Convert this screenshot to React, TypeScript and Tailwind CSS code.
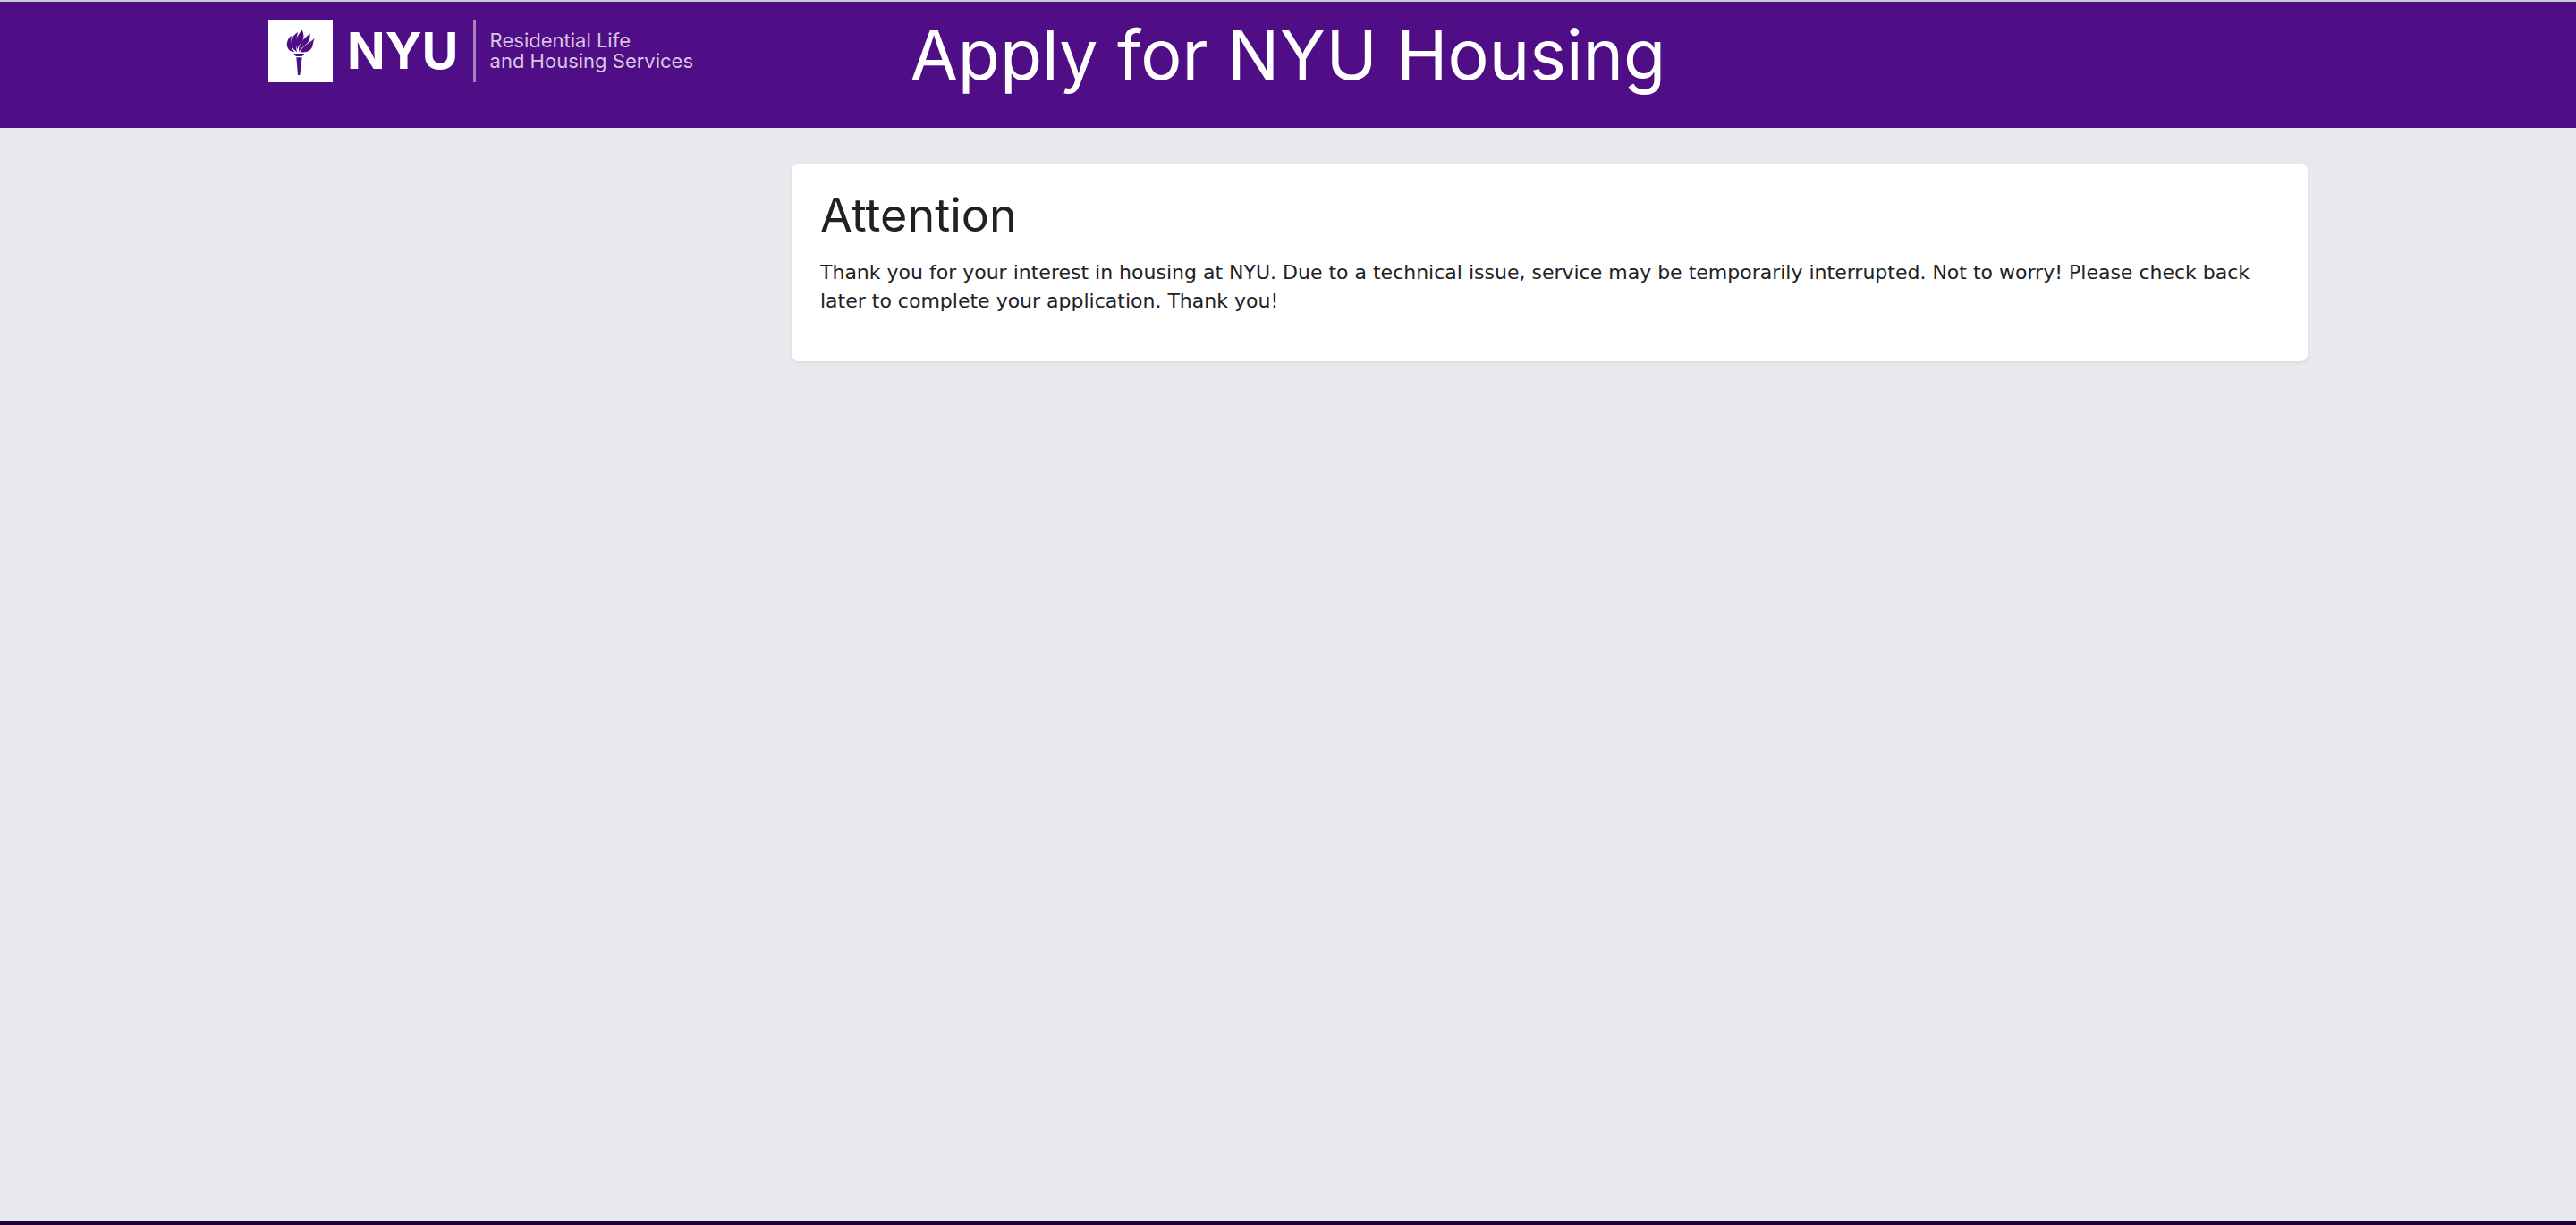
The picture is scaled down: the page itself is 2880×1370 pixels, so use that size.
function Torch() {
  return (
    <svg viewBox="0 0 216 210" className="h-[70px] w-[72px] shrink-0" aria-hidden="true">
      <rect width="216" height="210" fill="#fff" />
      <g fill="#500e86">
        <path d="M78 53 C65 63 60 78 64 92 C67 102 76 108 88 109 C81 101 78 94 79 86 C75 72 76 62 78 53Z" />
        <path d="M99 42 C84 52 74 66 77 82 C79 94 86 103 96 108 C93 98 93 89 96 81 C92 68 97 54 99 42Z" />
        <path d="M112 32 C107 45 96 54 93 68 C91 80 94 88 97 100 C101 88 106 82 112 75 C122 62 119 46 112 32Z" />
        <path d="M139 46 C131 57 116 65 109 79 C103 89 101 99 102 108 C108 98 115 91 126 83 C140 73 141 58 139 46Z" />
        <path d="M155 62 C146 72 129 80 119 91 C113 97 109 103 106 109 C120 111 134 108 142 100 C151 90 149 76 155 62Z" />
        <path d="M86 114 H120 V120 H115 L114 123 H92 L91 120 H86Z" />
        <path d="M94 127 H113 L106 186 H99Z" />
      </g>
    </svg>
  );
}

export default function App() {
  return (
    <div className="flex min-h-screen flex-col bg-[#e8e9ed] font-['Inter',sans-serif] text-[#21211f]">
      <header className="border-t-2 border-[#cbccd1] bg-[#500e86] px-[60px] text-white">
        <div className="mx-auto grid h-[141px] w-full max-w-[2280px] grid-cols-[1fr_auto_1fr] items-start">
          <a href="#" className="mt-5 flex items-center" aria-label="NYU Residential Life and Housing Services">
            <Torch />
            <span className="ml-4 text-[56px] leading-[70px] font-bold">NYU</span>
            <span className="ml-4 h-[70px] w-[3px] bg-[#a582c1]" />
            <span className="ml-4 text-[22px] leading-[23px] whitespace-nowrap text-[#d6c6e2]">
              Residential Life
              <br />
              and Housing Services
            </span>
          </a>
          <h1 className="mt-3.5 text-[77px] leading-[90px]">Apply for NYU Housing</h1>
        </div>
      </header>

      <main className="flex-1 px-[60px] pt-10">
        <div className="mx-auto grid w-full max-w-[2280px] grid-cols-4 gap-[60px]">
          <section className="col-span-3 col-start-2 rounded-lg bg-white px-8 pt-8 pb-[51px] shadow-[0_2px_4px_rgba(0,0,0,0.06)]">
            <h2 className="text-[52px] leading-[52px]">Attention</h2>
            <p className="mt-[22px] font-['DejaVu_Sans',sans-serif] text-[22px] leading-8">
              Thank you for your interest in housing at NYU. Due to a technical issue, service may be temporarily
              interrupted. Not to worry! Please check back later to complete your application. Thank you!
            </p>
          </section>
        </div>
      </main>

      <footer className="h-1 bg-[#22003a]" />
    </div>
  );
}
